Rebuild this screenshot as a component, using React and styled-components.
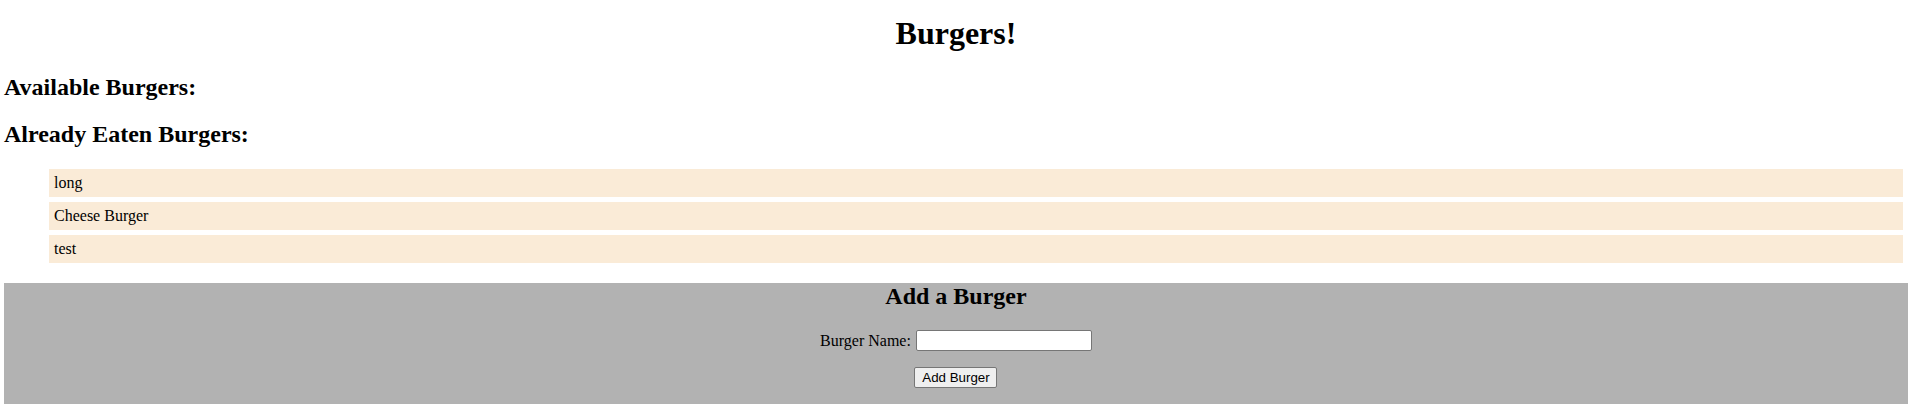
import styled, { createGlobalStyle } from "styled-components";

const GlobalStyle = createGlobalStyle`
  html, body {
    margin: 0;
    padding: 0;
    background: #ffffff;
    color: #000000;
    font-family: "Liberation Serif", "Times New Roman", serif;
    font-size: 16px;
  }
`;

const Page = styled.div`
  padding: 0 8px 0 4px;
`;

const Title = styled.h1`
  margin: 15px 0 22px;
  font-size: 32px;
  font-weight: bold;
  text-align: center;
`;

const SectionTitle = styled.h2`
  margin: 0 0 20px;
  font-size: 24px;
  font-weight: bold;
`;

const BurgerList = styled.ul`
  list-style: none;
  margin: 21px 5px 0 45px;
  padding: 0;
  display: flex;
  flex-direction: column;
  gap: 5px;
`;

const BurgerItem = styled.li`
  background-color: #faebd7;
  padding: 5px;
  line-height: 18px;
`;

const AddPanel = styled.div`
  margin-top: 20px;
  background-color: #b2b2b2;
  padding: 0 0 16px;
  display: flex;
  flex-direction: column;
  align-items: center;
`;

const PanelTitle = styled.h2`
  margin: 0 0 20px;
  font-size: 24px;
  font-weight: bold;
`;

const Form = styled.form`
  display: flex;
  flex-direction: column;
  align-items: center;
  gap: 16px;
`;

const FieldRow = styled.div`
  display: flex;
  align-items: center;
  gap: 5px;
  height: 21px;
`;

const Label = styled.label`
  font-size: 16px;
`;

const Input = styled.input`
  box-sizing: border-box;
  width: 176px;
  height: 21px;
  border: 1px solid #767676;
  border-radius: 2px;
  background: #ffffff;
  padding: 1px 2px;
  font-family: "Liberation Sans", Arial, sans-serif;
  font-size: 13.33px;
`;

const Button = styled.button`
  box-sizing: border-box;
  width: 83px;
  height: 21px;
  padding: 1px 6px;
  border: 1px solid #767676;
  border-radius: 2px;
  background: #efefef;
  color: #000000;
  font-family: "Liberation Sans", Arial, sans-serif;
  font-size: 13.33px;
  line-height: 1;
`;

const eaten = ["long", "Cheese Burger", "test"];

export default function App() {
  return (
    <Page>
      <GlobalStyle />
      <Title>Burgers!</Title>
      <SectionTitle>Available Burgers:</SectionTitle>
      <SectionTitle>Already Eaten Burgers:</SectionTitle>
      <BurgerList>
        {eaten.map((name) => (
          <BurgerItem key={name}>{name}</BurgerItem>
        ))}
      </BurgerList>
      <AddPanel>
        <PanelTitle>Add a Burger</PanelTitle>
        <Form onSubmit={(e) => e.preventDefault()}>
          <FieldRow>
            <Label htmlFor="burger_name">Burger Name:</Label>
            <Input id="burger_name" name="burger_name" type="text" />
          </FieldRow>
          <Button type="submit">Add Burger</Button>
        </Form>
      </AddPanel>
    </Page>
  );
}
